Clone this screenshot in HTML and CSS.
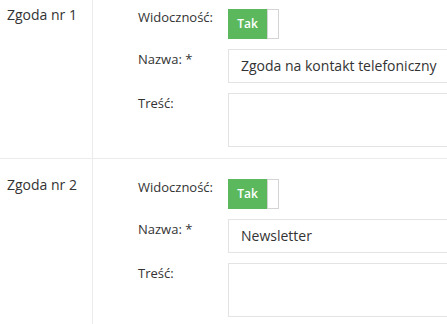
FILE: index.html
```html
<!DOCTYPE html>
<html lang="pl">
<head>
<meta charset="utf-8">
<title>Zgody</title>
<link rel="stylesheet" href="styles.css">
</head>
<body>
<div class="page">
  <section class="consent">
    <div class="consent-title">Zgoda nr 1</div>
    <div class="fields">
      <div class="row">
        <label class="label">Widoczność:</label>
        <div class="toggle"><span class="toggle-on">Tak</span><span class="toggle-handle"></span></div>
      </div>
      <div class="row">
        <label class="label">Nazwa: *</label>
        <div class="input">Zgoda na kontakt telefoniczny</div>
      </div>
      <div class="row">
        <label class="label">Treść:</label>
        <div class="textarea"></div>
      </div>
    </div>
  </section>
  <section class="consent">
    <div class="consent-title">Zgoda nr 2</div>
    <div class="fields">
      <div class="row">
        <label class="label">Widoczność:</label>
        <div class="toggle"><span class="toggle-on">Tak</span><span class="toggle-handle"></span></div>
      </div>
      <div class="row">
        <label class="label">Nazwa: *</label>
        <div class="input">Newsletter</div>
      </div>
      <div class="row">
        <label class="label">Treść:</label>
        <div class="textarea"></div>
      </div>
    </div>
  </section>
</div>
</body>
</html>
```
FILE: styles.css
```css
* { box-sizing: border-box; }
html, body { margin: 0; padding: 0; background: #fff; overflow: hidden; }
body {
  font-family: "Open Sans", "Liberation Sans", sans-serif;
  font-size: 13px;
  color: #333;
  width: 447px;
}
.page { margin-top: -11px; overflow: hidden; }
.consent {
  display: grid;
  grid-template-columns: 93px 1fr;
  border-bottom: 1px solid #ebebeb;
}
.consent-title {
  border-right: 1px solid #ebebeb;
  padding: 16px 0 0 7px;
  font-size: 14px;
  line-height: 20px;
}
.fields {
  padding: 20px 0 11px 45px;
  display: flex;
  flex-direction: column;
  gap: 10px;
}
.row {
  display: grid;
  grid-template-columns: 90px 1fr;
}
.label { line-height: 20px; }
.row:first-child .label { margin-top: -2px; }
.toggle {
  display: flex;
  height: 30px;
}
.toggle-on {
  width: 39px;
  background: #5cb85c;
  color: #fff;
  font-size: 12px;
  font-weight: 600;
  display: flex;
  align-items: center;
  justify-content: center;
  padding-bottom: 1px;
}
.toggle-handle {
  width: 12px;
  background: #fff;
  border: 1px solid #d4d4d4;
}
.input {
  height: 34px;
  border: 1px solid #e3e3e3;
  margin-right: -40px;
  padding: 0 12px;
  font-size: 14px;
  line-height: 32px;
  white-space: nowrap;
}
.textarea {
  height: 54px;
  border: 1px solid #e3e3e3;
  margin-right: -40px;
}
```
